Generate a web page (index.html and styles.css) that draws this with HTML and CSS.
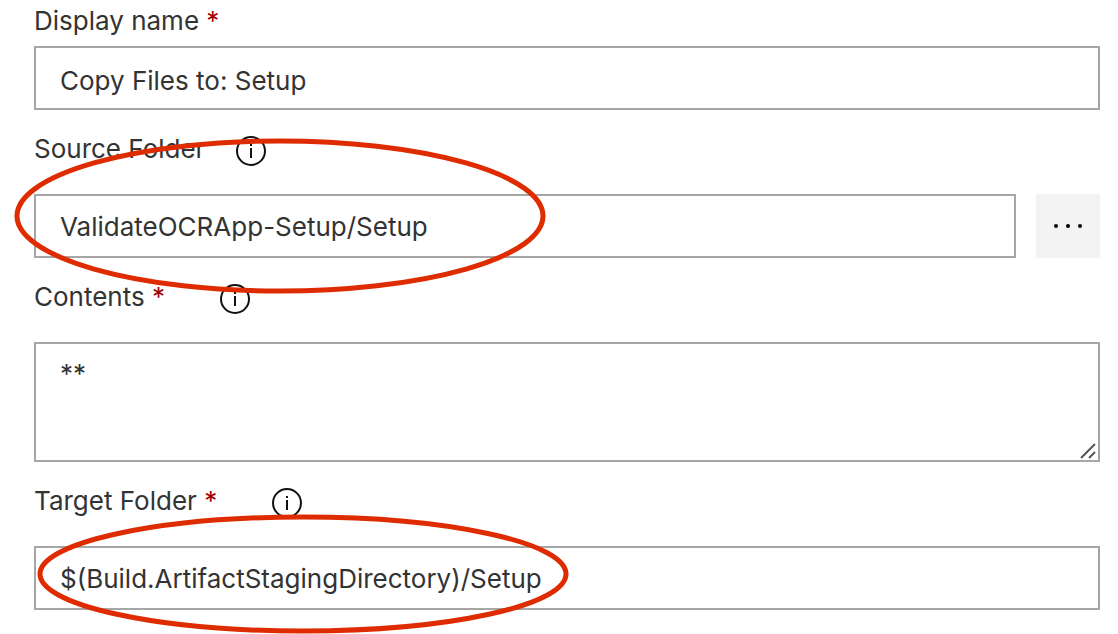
FILE: index.html
```html
<!DOCTYPE html>
<html lang="en">
<head>
<meta charset="utf-8">
<meta name="viewport" content="width=device-width, initial-scale=1">
<title>Copy Files</title>
<link rel="stylesheet" href="styles.css">
</head>
<body>
<form class="task-form">
  <div class="label-row label-row-first">
    <label class="label" for="display-name">Display name <span class="required">*</span></label>
  </div>
  <div class="field">
    <input class="control control-name" id="display-name" type="text" value="Copy Files to: Setup" required>
  </div>

  <div class="label-row">
    <label class="label" for="source-folder">Source Folder</label>
    <button class="info" type="button" aria-label="About Source Folder">
      <svg class="info-icon" viewBox="0 0 32 32"><circle cx="16" cy="16" r="14"/><path d="M16 13V23M16 9v2"/></svg>
    </button>
  </div>
  <div class="field field-browse">
    <input class="control" id="source-folder" type="text" value="ValidateOCRApp-Setup/Setup">
    <button class="browse" type="button" aria-label="Browse">
      <svg class="browse-icon" viewBox="0 0 32 8"><circle cx="4" cy="4" r="2"/><circle cx="16" cy="4" r="2"/><circle cx="28" cy="4" r="2"/></svg>
    </button>
    <svg class="ring ring-source" viewBox="0 0 532 156"><ellipse cx="266" cy="78" rx="263" ry="75"/></svg>
  </div>

  <div class="label-row">
    <label class="label" for="contents">Contents <span class="required">*</span></label>
    <button class="info info-wide" type="button" aria-label="About Contents">
      <svg class="info-icon" viewBox="0 0 32 32"><circle cx="16" cy="16" r="14"/><path d="M16 13V23M16 9v2"/></svg>
    </button>
  </div>
  <div class="field">
    <textarea class="control control-area" id="contents" required>**</textarea>
    <svg class="grip" viewBox="0 0 16 16"><path d="M1 15L15 1M9 15l6-6"/></svg>
  </div>

  <div class="label-row">
    <label class="label" for="target-folder">Target Folder <span class="required">*</span></label>
    <button class="info info-wide" type="button" aria-label="About Target Folder">
      <svg class="info-icon" viewBox="0 0 32 32"><circle cx="16" cy="16" r="14"/><path d="M16 13V23M16 9v2"/></svg>
    </button>
  </div>
  <div class="field">
    <input class="control" id="target-folder" type="text" value="$(Build.ArtifactStagingDirectory)/Setup" required>
    <svg class="ring ring-target" viewBox="0 0 532 120"><ellipse cx="266" cy="60" rx="263" ry="57"/></svg>
  </div>
</form>
</body>
</html>
```
FILE: styles.css
```css
* {
  box-sizing: border-box;
}

body {
  margin: 0;
  background: #fff;
  color: #333;
  font-family: Inter, "Liberation Sans", sans-serif;
  font-size: 26px;
  line-height: 32px;
}

.task-form {
  padding: 0 18px 24px 34px;
}

.label-row {
  display: flex;
  align-items: flex-start;
  height: 84px;
  padding-top: 23px;
}

.label-row-first {
  height: 46px;
  padding-top: 5px;
}

.required {
  color: #a00000;
}

.info {
  width: 32px;
  height: 32px;
  margin: 2px 0 0 30px;
  padding: 0;
  border: 0;
  background: none;
}

.info-wide {
  margin-left: 54px;
}

.info-icon {
  display: block;
  width: 32px;
  height: 32px;
  fill: none;
  stroke: #111;
  stroke-width: 2;
}

.field {
  display: flex;
  position: relative;
}

.field-browse {
  gap: 20px;
}

.control {
  flex: 1;
  min-width: 0;
  height: 64px;
  margin: 0;
  padding: 0 24px;
  border: 2px solid #a6a6a6;
  border-radius: 0;
  background: #fff;
  color: #333;
  font: inherit;
}

.control-name {
  padding-top: 4px;
}

.control-area {
  height: 120px;
  padding-top: 14px;
  resize: none;
}

.browse {
  display: grid;
  place-items: center;
  width: 64px;
  height: 64px;
  padding: 0;
  border: 0;
  background: #f3f3f3;
}

.browse-icon {
  width: 32px;
  height: 8px;
  fill: #000;
}

.grip {
  position: absolute;
  right: 4px;
  bottom: 3px;
  width: 16px;
  height: 16px;
  fill: none;
  stroke: #555;
  stroke-width: 2;
}

.ring {
  position: absolute;
  width: 532px;
  fill: none;
  stroke: #de2b00;
  stroke-width: 5;
  pointer-events: none;
}

.ring-source {
  top: -56px;
  left: -20px;
  height: 156px;
}

.ring-target {
  top: -32px;
  left: 3px;
  height: 120px;
}
```
